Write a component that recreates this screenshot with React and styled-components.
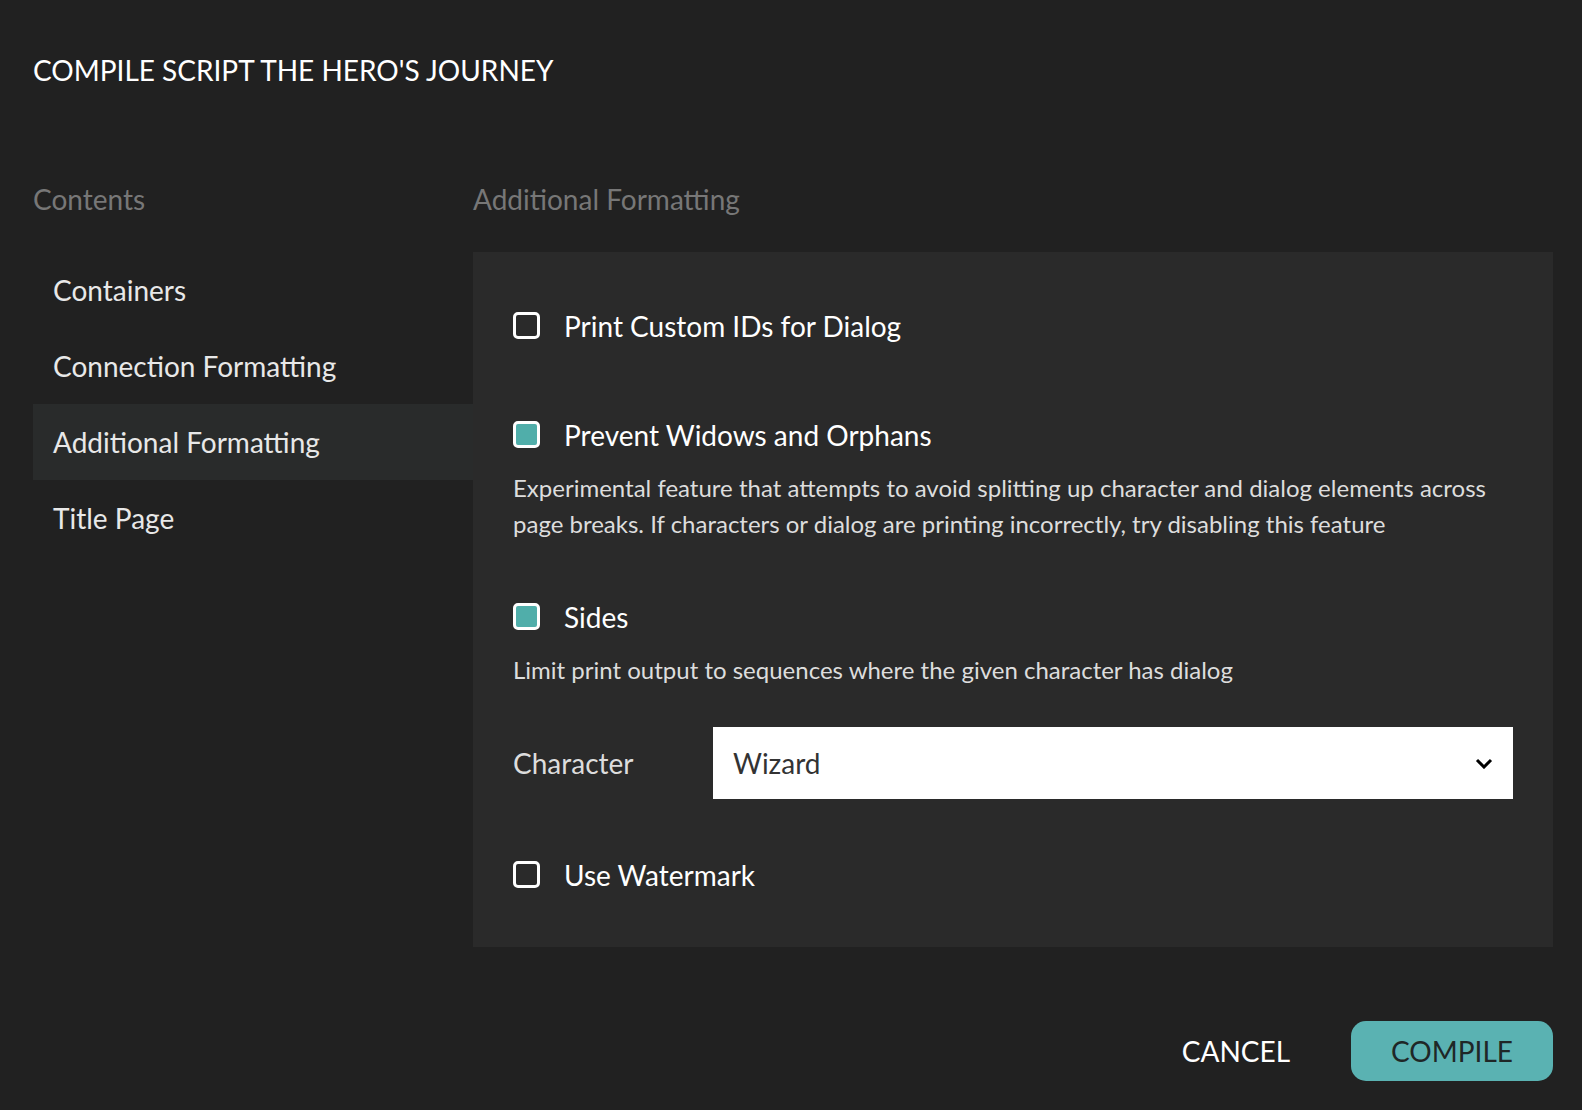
import React from 'react'
import styled, { createGlobalStyle } from 'styled-components'

const GlobalStyle = createGlobalStyle`
  html, body {
    margin: 0;
    padding: 0;
    background: #212121;
  }
  body {
    font-family: Lato, "Noto Sans", sans-serif;
    color: #f2f2f2;
  }
`

const Page = styled.div`
  box-sizing: border-box;
  width: 1582px;
  height: 1110px;
  padding: 53px 29px 30px 33px;
  display: flex;
  flex-direction: column;
  background: #212121;
`

const Title = styled.h1`
  margin: 0;
  font-size: 28px;
  line-height: 34px;
  font-weight: 400;
  color: #ffffff;
`

const Body = styled.div`
  margin-top: 95px;
  display: grid;
  grid-template-columns: 440px 1fr;
`

const Heading = styled.h2`
  margin: 0 0 36px;
  font-size: 28px;
  line-height: 34px;
  font-weight: 400;
  color: #777777;
`

const Menu = styled.ul`
  list-style: none;
  margin: 0;
  padding: 0;
`

const MenuItem = styled.li`
  height: 76px;
  display: flex;
  align-items: center;
  padding-left: 20px;
  font-size: 28px;
  color: #e8e8e8;
  background: ${p => (p.$active ? '#292b2b' : 'transparent')};
`

const Panel = styled.div`
  background: #2a2a2a;
  padding: 60px 40px 59px;
  display: flex;
  flex-direction: column;
`

const CheckRow = styled.label`
  display: flex;
  align-items: center;
  height: 27px;
  gap: 24px;
  margin-top: ${p => p.$gap || 0}px;
  font-size: 28px;
  color: #ffffff;
`

const Box = styled.span`
  box-sizing: border-box;
  width: 27px;
  height: 27px;
  flex: none;
  border: 3px solid #ffffff;
  border-radius: 5px;
  background: ${p => (p.$checked ? '#50aeaa' : 'transparent')};
`

const Description = styled.p`
  margin: 22px 0 0;
  font-size: 24px;
  line-height: 36px;
  color: #dddddd;
`

const FieldRow = styled.div`
  margin-top: 39px;
  display: grid;
  grid-template-columns: 200px 1fr;
  align-items: center;
`

const FieldLabel = styled.span`
  font-size: 28px;
  color: #dddddd;
`

const Select = styled.div`
  height: 72px;
  background: #ffffff;
  display: flex;
  align-items: center;
  justify-content: space-between;
  padding: 0 20px;
  font-size: 28px;
  color: #333333;
`

const Footer = styled.div`
  margin-top: 74px;
  display: flex;
  justify-content: flex-end;
  align-items: center;
  gap: 61px;
`

const TextButton = styled.button`
  border: none;
  background: none;
  padding: 0;
  font-family: inherit;
  font-size: 28px;
  color: #ffffff;
  cursor: pointer;
`

const PrimaryButton = styled.button`
  border: none;
  height: 60px;
  padding: 0 40px;
  border-radius: 15px;
  background: #5ab2b2;
  font-family: inherit;
  font-size: 28px;
  color: #1f2727;
  cursor: pointer;
`

function Check({ checked, gap, children }) {
  return (
    <CheckRow $gap={gap}>
      <Box $checked={checked} />
      {children}
    </CheckRow>
  )
}

export default function App() {
  const items = ['Containers', 'Connection Formatting', 'Additional Formatting', 'Title Page']
  return (
    <>
      <GlobalStyle />
      <Page>
        <Title>COMPILE SCRIPT THE HERO'S JOURNEY</Title>
        <Body>
          <div>
            <Heading>Contents</Heading>
            <Menu>
              {items.map(item => (
                <MenuItem key={item} $active={item === 'Additional Formatting'}>
                  {item}
                </MenuItem>
              ))}
            </Menu>
          </div>
          <div>
            <Heading>Additional Formatting</Heading>
            <Panel>
              <Check>Print Custom IDs for Dialog</Check>
              <Check checked gap={82}>Prevent Widows and Orphans</Check>
              <Description>
                Experimental feature that attempts to avoid splitting up character and dialog
                elements across page breaks. If characters or dialog are printing incorrectly, try
                disabling this feature
              </Description>
              <Check checked gap={61}>Sides</Check>
              <Description>Limit print output to sequences where the given character has dialog</Description>
              <FieldRow>
                <FieldLabel>Character</FieldLabel>
                <Select>
                  Wizard
                  <svg width="18" height="11" viewBox="0 0 18 11">
                    <polyline points="2,2 9,9 16,2" fill="none" stroke="#000" strokeWidth="3" />
                  </svg>
                </Select>
              </FieldRow>
              <Check gap={62}>Use Watermark</Check>
            </Panel>
          </div>
        </Body>
        <Footer>
          <TextButton>CANCEL</TextButton>
          <PrimaryButton>COMPILE</PrimaryButton>
        </Footer>
      </Page>
    </>
  )
}
